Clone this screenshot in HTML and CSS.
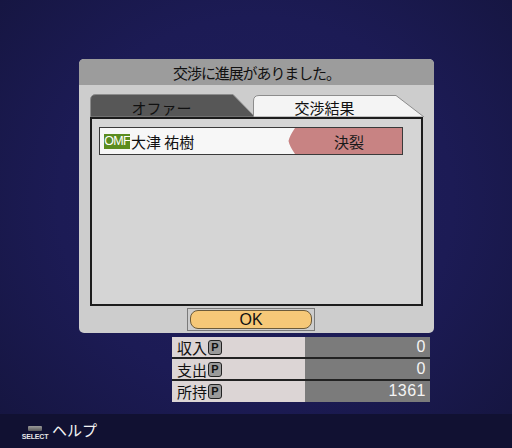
FILE: index.html
```html
<!DOCTYPE html>
<html lang="ja">
<head>
<meta charset="utf-8">
<link rel="stylesheet" href="styles.css">
</head>
<body>
<div class="screen">
  <div class="main">
    <div class="dialog">
      <div class="title">交渉に進展がありました。</div>
      <div class="body">
        <div class="tabs">
          <div class="tab tab-off">
            <svg class="tab-shape" width="166" height="23" viewBox="0 0 166 23"><path d="M0.5 23 V6 Q0.5 0.5 6 0.5 H143 L165 23 Z" fill="#575757" stroke="#8c8c8c" stroke-width="1"/></svg>
            <span class="tab-label">オファー</span>
          </div>
          <div class="tab tab-on">
            <svg class="tab-shape" width="172" height="23" viewBox="0 0 172 23"><path d="M0.5 23 V7 Q0.5 1.5 6 1.5 H143 L171 23 Z" fill="#f4f4f4" stroke="#8c8c8c" stroke-width="1"/></svg>
            <span class="tab-label">交渉結果</span>
          </div>
        </div>
        <div class="frame">
          <div class="row">
            <div class="player">
              <span class="pos">OMF</span><span class="name">大津 祐樹</span>
            </div>
            <div class="result">
              <svg class="notch" width="8" height="26" viewBox="0 0 8 26"><path d="M0 0 H7 Q1.5 8 0.5 13 Q1.5 18 7 26 H0 Z" fill="#f7f7f7"/></svg>
              <span>決裂</span>
            </div>
          </div>
        </div>
        <div class="ok-wrap">
          <div class="ok">OK</div>
        </div>
      </div>
    </div>
    <div class="stats">
      <div class="stat"><div class="label">収入<span class="p">P</span></div><div class="value">0</div></div>
      <div class="stat"><div class="label">支出<span class="p">P</span></div><div class="value">0</div></div>
      <div class="stat"><div class="label">所持<span class="p">P</span></div><div class="value">1361</div></div>
    </div>
  </div>
  <div class="footer">
    <div class="select-btn">
      <span class="select-bar"></span>
      <span class="select-text">SELECT</span>
    </div>
    <span class="help">ヘルプ</span>
  </div>
</div>
</body>
</html>
```
FILE: styles.css
```css
html, body {
  margin: 0;
  padding: 0;
}
body {
  width: 512px;
  height: 448px;
  overflow: hidden;
  font-family: "Noto Sans CJK JP", "Noto Sans", sans-serif;
  background: #1b1a52;
}
.screen {
  width: 512px;
  height: 448px;
  display: flex;
  flex-direction: column;
  background: radial-gradient(ellipse 70% 75% at 50% 45%, #1f1e5c 0%, #1c1b55 55%, #15153f 100%);
}
.main {
  flex: 1;
  padding-top: 59px;
}
.dialog {
  margin-left: 79px;
  width: 355px;
  height: 274px;
  border-radius: 5px;
  overflow: hidden;
  background: #cdcdcd;
  display: flex;
  flex-direction: column;
}
.title {
  height: 26px;
  background: #9c9c9c;
  display: flex;
  align-items: center;
  justify-content: center;
  font-size: 15px;
  letter-spacing: -1.1px;
  color: #111;
  line-height: 1;
  padding-top: 1px;
  box-sizing: border-box;
}
.body {
  flex: 1;
  padding: 9px 0 0 11px;
}
.tabs {
  display: flex;
  height: 23px;
}
.tab {
  position: relative;
  height: 23px;
}
.tab-off {
  width: 166px;
}
.tab-on {
  width: 172px;
  margin-left: -3px;
}
.tab-shape {
  position: absolute;
  left: 0;
  top: 0;
  display: block;
}
.tab-label {
  position: relative;
  display: block;
  width: 143px;
  text-align: center;
  font-size: 15px;
  line-height: 23px;
  color: #111;
  padding-top: 2px;
}
.frame {
  box-sizing: border-box;
  width: 333px;
  height: 189px;
  border: 2px solid #1c1c1c;
  background: #d5d5d5;
  padding: 8px 0 0 7px;
}
.row {
  box-sizing: border-box;
  width: 304px;
  height: 28px;
  border: 1px solid #3a3a3a;
  display: flex;
  background: #f7f7f7;
}
.player {
  width: 184px;
  display: flex;
  align-items: center;
  padding-left: 4px;
}
.pos {
  display: inline-block;
  background: #5b8c1f;
  color: #fff;
  font-family: "Liberation Sans", sans-serif;
  font-size: 12.5px;
  line-height: 15px;
  height: 15px;
  width: 26px;
  text-align: center;
  letter-spacing: -0.7px;
  margin-right: 1px;
  overflow: hidden;
  white-space: nowrap;
}
.name {
  font-size: 15px;
  color: #111;
  line-height: 1;
}
.result {
  position: relative;
  flex: 1;
  background: #c88383;
  display: flex;
  align-items: center;
  justify-content: center;
  font-size: 15px;
  color: #1a1a1a;
  padding-left: 8px;
}
.notch {
  position: absolute;
  left: 0;
  top: 0;
}
.ok-wrap {
  margin: 2px 0 0 97px;
  width: 128px;
  height: 23px;
  box-sizing: border-box;
  border: 1px solid #7a7a7a;
  padding: 1px 2px;
}
.ok {
  box-sizing: border-box;
  height: 100%;
  border: 1px solid #6b5a3a;
  border-radius: 8px;
  background: #f6c878;
  text-align: center;
  font-family: "Liberation Sans", sans-serif;
  font-size: 16px;
  line-height: 18px;
  color: #111;
}
.stats {
  margin: 4px 0 0 172px;
  width: 258px;
  display: flex;
  flex-direction: column;
  gap: 2px;
  background: #222;
}
.stat {
  display: flex;
  height: 20px;
}
.stat:last-child {
  height: 21px;
}
.label {
  width: 133px;
  background: #dcd5d5;
  display: flex;
  align-items: center;
  padding-left: 5px;
  box-sizing: border-box;
  font-size: 15px;
  color: #111;
  line-height: 1;
}
.p {
  display: inline-flex;
  align-items: center;
  justify-content: center;
  box-sizing: border-box;
  width: 14px;
  height: 15px;
  border: 1.5px solid #222;
  border-radius: 3px;
  background: #9a9a9a;
  font-family: "Liberation Sans", sans-serif;
  font-weight: bold;
  font-size: 11px;
  color: #111;
  margin-left: 1px;
}
.value {
  flex: 1;
  background: #7b7b7b;
  color: #f4f4f4;
  text-align: right;
  padding-right: 4px;
  font-family: "Liberation Sans", sans-serif;
  font-size: 16px;
  line-height: 20px;
  letter-spacing: 0.5px;
}
.footer {
  height: 34px;
  background: #111132;
  display: flex;
  align-items: center;
  padding-left: 22px;
  box-sizing: border-box;
}
.select-btn {
  display: flex;
  flex-direction: column;
  align-items: center;
  width: 26px;
  margin-top: 4px;
}
.select-bar {
  display: block;
  width: 14px;
  height: 5px;
  background: linear-gradient(#9a9a9a, #5a5a5a);
  border-radius: 1px;
}
.select-text {
  display: block;
  font-family: "Liberation Sans", sans-serif;
  font-weight: bold;
  font-size: 7px;
  line-height: 8px;
  color: #e8e8e8;
  margin-top: 2px;
  letter-spacing: -0.2px;
}
.help {
  margin-left: 4px;
  font-size: 15px;
  color: #f4f4f4;
  line-height: 1;
  margin-bottom: 4px;
}
```
